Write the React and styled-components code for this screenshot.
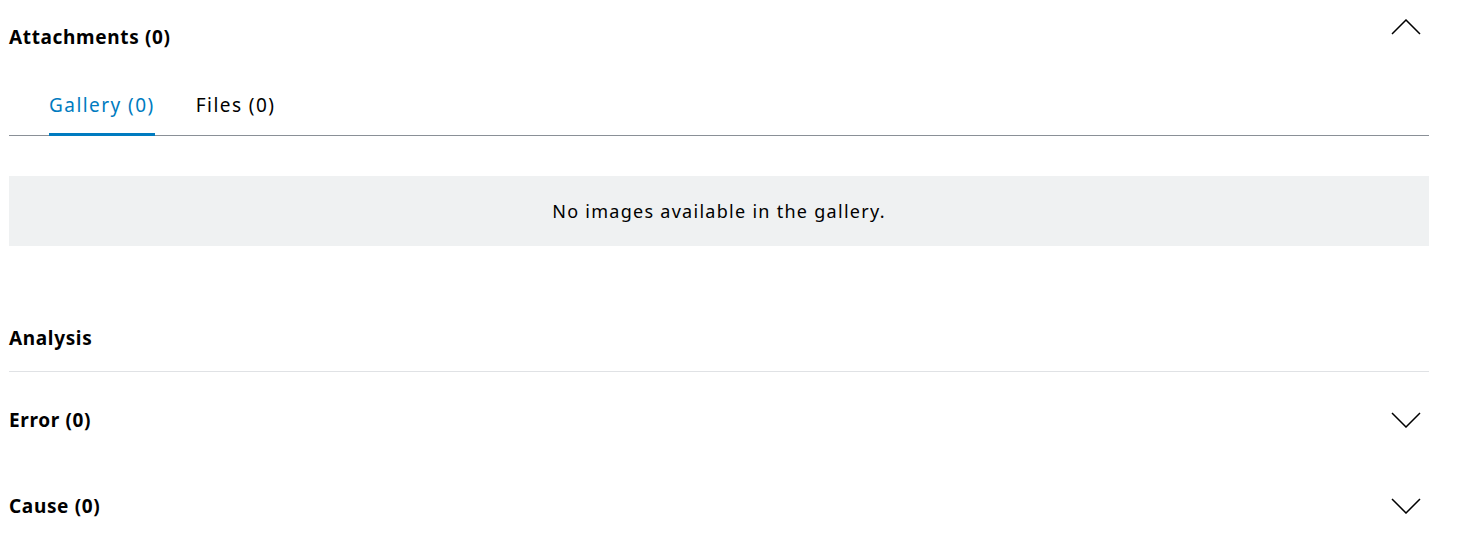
import React from "react";
import styled, { createGlobalStyle } from "styled-components";

const Global = createGlobalStyle`
  html, body { margin: 0; padding: 0; background: #fff; }
  body { font-family: "Noto Sans", "Open Sans", sans-serif; color: #000; }
`;

const Page = styled.div`
  width: 1420px;
  padding: 0 0 0 9px;
  display: flex;
  flex-direction: column;
`;

const SectionHeader = styled.div`
  display: flex;
  align-items: center;
  justify-content: space-between;
  height: ${(p) => p.$h || 74}px;
  border-bottom: ${(p) => (p.$divider ? "1px solid #e0e2e5" : "none")};
`;

const Title = styled.h2`
  margin: 0;
  font-size: 19px;
  font-weight: 700;
  letter-spacing: 0.65px;
  line-height: 24px;
`;

const ChevronBtn = styled.button`
  border: 0;
  background: none;
  padding: 0;
  margin-right: 8px;
  margin-bottom: ${(p) => (p.$up ? 20 : 0)}px;
  width: 30px;
  height: 16px;
  display: flex;
  align-items: center;
  justify-content: center;
  cursor: pointer;
`;

const Tabs = styled.div`
  display: flex;
  gap: 41px;
  padding-left: 40px;
  border-bottom: 1px solid #8a9097;
`;

const Tab = styled.div`
  font-size: 19px;
  letter-spacing: 1.45px;
  line-height: 24px;
  padding: 19px 0 16px;
  color: ${(p) => (p.$active ? "#007bc0" : "#000")};
  border-bottom: 3px solid ${(p) => (p.$active ? "#007bc0" : "transparent")};
  margin-bottom: -1px;
`;

const Empty = styled.div`
  margin-top: 40px;
  height: 70px;
  background: #eff1f2;
  display: flex;
  align-items: center;
  justify-content: center;
  font-size: 18px;
  letter-spacing: 1.28px;
`;

const Spacer = styled.div`
  height: ${(p) => p.$h}px;
`;

const Chevron = ({ up }) => (
  <svg width="30" height="16" viewBox="0 0 30 16" fill="none">
    <path
      d={up ? "M1 15 L15 1 L29 15" : "M1 1 L15 15 L29 1"}
      stroke="#000"
      strokeWidth="1.5"
    />
  </svg>
);

export default function App() {
  return (
    <>
      <Global />
      <Page>
        <SectionHeader $h={74}>
          <Title>Attachments (0)</Title>
          <ChevronBtn $up aria-label="Collapse">
            <Chevron up />
          </ChevronBtn>
        </SectionHeader>
        <Tabs>
          <Tab $active>Gallery (0)</Tab>
          <Tab>Files (0)</Tab>
        </Tabs>
        <Empty>No images available in the gallery.</Empty>
        <Spacer $h={59} />
        <SectionHeader $h={66} $divider>
          <Title>Analysis</Title>
        </SectionHeader>
        <SectionHeader $h={95}>
          <Title>Error (0)</Title>
          <ChevronBtn aria-label="Expand">
            <Chevron />
          </ChevronBtn>
        </SectionHeader>
        <SectionHeader $h={78}>
          <Title>Cause (0)</Title>
          <ChevronBtn aria-label="Expand">
            <Chevron />
          </ChevronBtn>
        </SectionHeader>
      </Page>
    </>
  );
}
